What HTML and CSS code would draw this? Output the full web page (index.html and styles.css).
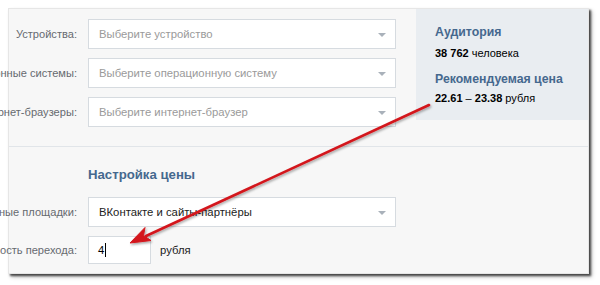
FILE: index.html
```html
<!DOCTYPE html>
<html lang="ru">
<head>
<meta charset="utf-8">
<link rel="stylesheet" href="styles.css">
</head>
<body>
<div class="panel">
  <div class="top">
    <div class="form">
      <div class="row">
        <div class="label"><span>Устройства:</span></div>
        <div class="select placeholder">Выберите устройство<i class="caret"></i></div>
      </div>
      <div class="row">
        <div class="label"><span>Операционные системы:</span></div>
        <div class="select placeholder">Выберите операционную систему<i class="caret"></i></div>
      </div>
      <div class="row">
        <div class="label"><span>Интернет-браузеры:</span></div>
        <div class="select placeholder">Выберите интернет-браузер<i class="caret"></i></div>
      </div>
    </div>
    <div class="info">
      <div class="info-title">Аудитория</div>
      <div class="info-value"><b>38 762</b> человека</div>
      <div class="info-title second">Рекомендуемая цена</div>
      <div class="info-value last"><b>22.61</b> – <b>23.38</b> рубля</div>
    </div>
  </div>
  <div class="bottom">
    <div class="section-title">Настройка цены</div>
    <div class="row">
      <div class="label"><span>Рекламные площадки:</span></div>
      <div class="select">ВКонтакте и сайты-партнёры<i class="caret"></i></div>
    </div>
    <div class="row">
      <div class="label"><span>Стоимость перехода:</span></div>
      <div class="input">4<i class="cursor"></i></div>
      <div class="unit">рубля</div>
    </div>
  </div>
</div>
<svg class="arrow" width="600" height="285" viewBox="0 0 600 285">
  <defs>
    <filter id="sh" x="-10%" y="-10%" width="120%" height="130%">
      <feDropShadow dx="1" dy="1.5" stdDeviation="1" flood-color="#000" flood-opacity="0.35"/>
    </filter>
  </defs>
  <g filter="url(#sh)" fill="#d3161c" stroke="#d3161c">
    <line x1="429" y1="105" x2="146" y2="236" stroke-width="2.6" stroke-linecap="round"/>
    <path d="M130 243 L145 227.5 L143.5 235.5 L151 240.5 Z" stroke-width="1" stroke-linejoin="round"/>
  </g>
</svg>
</body>
</html>
```

FILE: styles.css
```css
html, body {
  margin: 0;
  padding: 0;
  background: #ffffff;
}

body {
  width: 600px;
  height: 285px;
  overflow: hidden;
  position: relative;
  font-family: "Liberation Sans", Arial, sans-serif;
}

.panel {
  margin: 8px 0 0 8px;
  width: 581px;
  height: 266px;
  box-sizing: border-box;
  background: #f7f7f7;
  border: 1px solid #e6e6e6;
  box-shadow: 2px 2px 2px rgba(0, 0, 0, 0.65), 3px 3px 4px rgba(0, 0, 0, 0.25);
  display: flex;
  flex-direction: column;
}

.top {
  display: flex;
  height: 137px;
  border-bottom: 1px solid #e1e5e9;
}

.form {
  flex: 1;
  padding-top: 10px;
  display: flex;
  flex-direction: column;
  gap: 9px;
}

.row {
  display: flex;
  align-items: center;
}

.label {
  width: 68px;
  margin-right: 11px;
  display: flex;
  justify-content: flex-end;
  white-space: nowrap;
  font-size: 11.1px;
  color: #666a6f;
}

.select {
  position: relative;
  width: 308px;
  height: 30px;
  box-sizing: border-box;
  background: #ffffff;
  border: 1px solid #d6dbe0;
  padding: 0 0 0 10px;
  display: flex;
  align-items: center;
  font-size: 11.3px;
  color: #222;
}

.select.placeholder {
  color: #9a9a9a;
}

.caret {
  position: absolute;
  right: 9px;
  top: 13px;
  width: 0;
  height: 0;
  border-left: 4px solid transparent;
  border-right: 4px solid transparent;
  border-top: 4px solid #a9b1ba;
}

.info {
  width: 172px;
  height: 111px;
  box-sizing: border-box;
  background: #e9edf1;
  padding: 16px 10px 0 19px;
}

.info-title {
  font-size: 12.3px;
  font-weight: bold;
  color: #45688e;
  line-height: 15px;
}

.info-title.second {
  margin-top: 12px;
}

.info-value {
  margin-top: 6px;
  font-size: 11px;
  line-height: 14px;
  color: #000;
}

.info-value.last {
  margin-top: 4px;
}

.bottom {
  padding-top: 20px;
  display: flex;
  flex-direction: column;
}

.section-title {
  margin-left: 79px;
  font-size: 13.2px;
  font-weight: bold;
  color: #45688e;
  line-height: 16px;
  margin-bottom: 14px;
}

.bottom .row + .row {
  margin-top: 9px;
}

.input {
  width: 63px;
  height: 28px;
  box-sizing: border-box;
  background: #ffffff;
  border: 1px solid #d6dbe0;
  padding-left: 9px;
  display: flex;
  align-items: center;
  font-size: 11.3px;
  color: #000;
}

.cursor {
  display: inline-block;
  width: 1px;
  height: 14px;
  background: #000;
  margin-left: 1px;
}

.unit {
  margin-left: 9px;
  font-size: 11.3px;
  color: #222;
}

.arrow {
  position: absolute;
  left: 0;
  top: 0;
  pointer-events: none;
}
```
